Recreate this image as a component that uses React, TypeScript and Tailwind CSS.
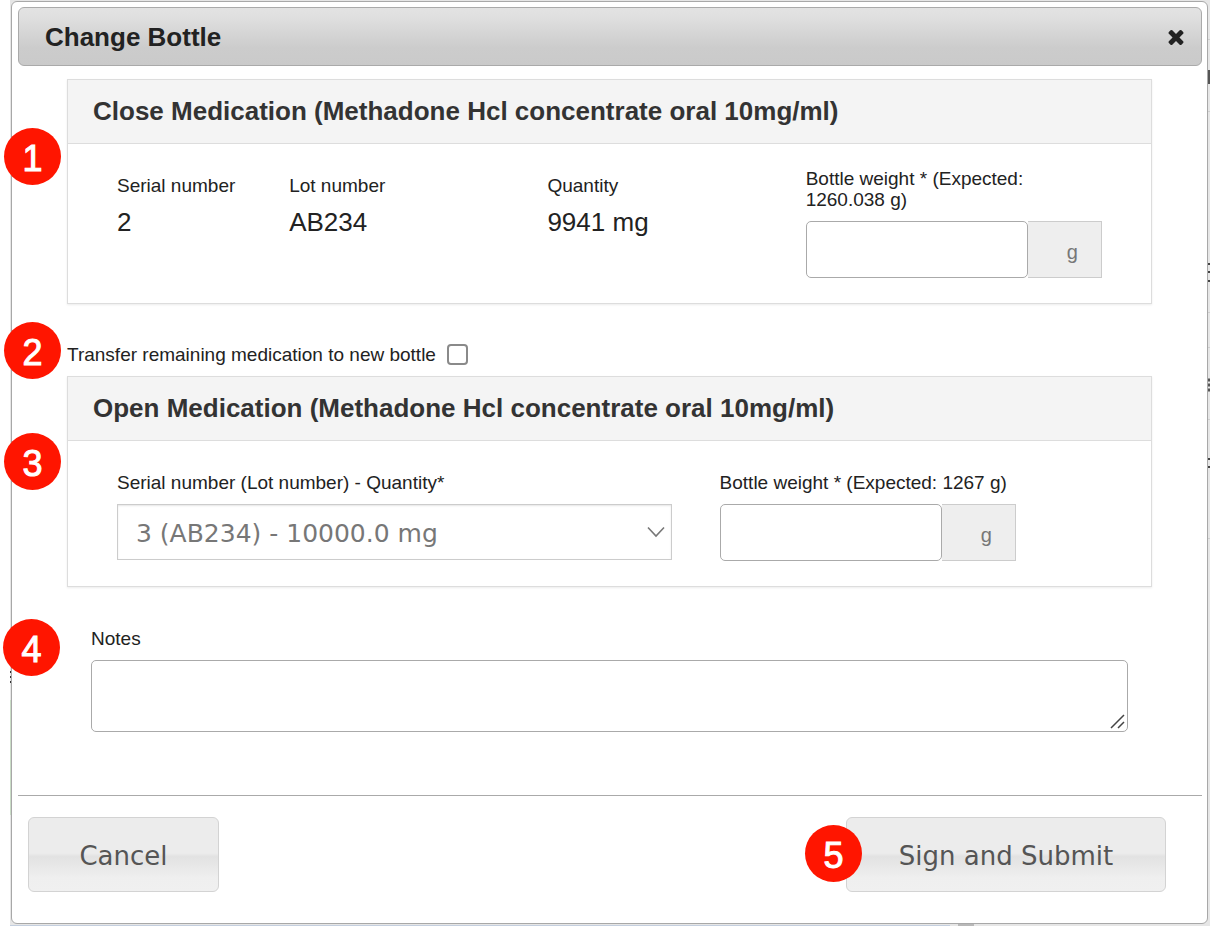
import React from "react";

function StepBadge({ step, className }: { step: number; className: string }) {
  return (
    <span
      className={`absolute z-10 flex h-[57px] w-[57px] items-center justify-center rounded-full bg-[#ff1500] pt-1 text-[36px] leading-9 text-white [-webkit-text-stroke:1px_white] ${className}`}
    >
      {step}
    </span>
  );
}

function Panel({ title, step, children }: { title: string; step: number; children: React.ReactNode }) {
  return (
    <section className="relative border border-[#dddddd] bg-white shadow-[0_1px_2px_rgba(0,0,0,0.08)]">
      <StepBadge step={step} className={step === 1 ? "top-12 -left-16" : "top-14 -left-16"} />
      <h2 className="border-b border-[#dddddd] bg-[#f4f4f4] px-[25px] text-[26px] leading-[63px] font-bold text-[#333333]">
        {title}
      </h2>
      <div className="grid grid-cols-12 px-[25px] pt-6 pb-[25px]">{children}</div>
    </section>
  );
}

function ReadOnlyField({ label, value, className }: { label: string; value: string; className: string }) {
  return (
    <dl className={`px-6 ${className}`}>
      <dt className="text-[19px] leading-[35px]">{label}</dt>
      <dd className="text-[26px] leading-[38px]">{value}</dd>
    </dl>
  );
}

function WeightInput({ id }: { id: string }) {
  return (
    <div className="flex h-[57px]">
      <input
        id={id}
        type="text"
        className="h-full w-3/4 rounded-[5px] border border-[#aaaaaa] bg-white px-4 text-[25px] outline-none"
      />
      <span className="flex h-full w-1/4 items-center justify-end border border-l-0 border-[#cccccc] bg-[#eeeeee] pt-1 pr-[23px] text-[20px] text-[#777777]">
        g
      </span>
    </div>
  );
}

const buttonClass =
  "h-[75px] rounded-[6px] border border-[#d3d3d3] bg-[linear-gradient(#ececec_0%,#ececec_48%,#e2e2e2_53%,#efefef_82%,#f0f0f0_100%)] pt-1 font-['Verdana','DejaVu_Sans',sans-serif] text-[26px] text-[#555555]";

/* Slivers of the dimmed page that show around the dialog. */
function PageEdge() {
  return (
    <div aria-hidden="true">
      <svg className="absolute inset-y-0 right-0" width="2" height="925" viewBox="0 0 2 925">
        <path d="M0 39.5h2M0 111.5h2M0 312.5h2M0 347.5h2M0 419.5h2M0 538.5h2" stroke="#cfcfcf" />
        <path d="M0 70h2v14H0z" fill="#555555" />
        <path d="M0 264h2M0 272h2M0 281h2M0 459h2M0 467h2" stroke="#444444" strokeWidth="2" />
        <path d="M0 380h2M0 385h2M0 390h2" stroke="#555555" strokeWidth="3" />
      </svg>
      <svg className="absolute inset-y-0 left-0" width="1" height="925" viewBox="0 0 1 925">
        <path d="M0 672h1M0 677h1M0 682h1" stroke="#333333" strokeWidth="2" />
        <path d="M0 700h1v115H0z" fill="#c9dcc6" />
      </svg>
      <svg className="absolute bottom-0 left-0" width="975" height="2" viewBox="0 0 975 2">
        <path d="M0 1h940v1H0z" fill="#c4cfdf" />
        <path d="M948 0h16v2h-16z" fill="#b8b8b8" />
      </svg>
    </div>
  );
}

export default function App() {
  return (
    <div className="min-h-screen bg-white pl-[10px] font-['Liberation_Sans',Arial,sans-serif] text-[#222222]">
      <div className="relative bg-[#e6e6e6] pt-px pr-[2px] pb-[2px] pl-px">
        <PageEdge />
        <div
          role="dialog"
          aria-labelledby="dialog-title"
          className="relative rounded-[6px] border border-[#a8a8a8] bg-white pt-[5px] pr-[5px] pb-[31px] pl-[6px]"
        >
          <header className="flex h-[59px] items-center justify-between rounded-[6px] border border-[#aaaaaa] bg-[linear-gradient(#e3e3e3_0%,#dedede_20%,#cccccc_70%,#cacaca_100%)] pr-[17px] pl-[26px]">
            <h1 id="dialog-title" className="text-[26px] leading-8 font-bold">
              Change Bottle
            </h1>
            <button type="button" aria-label="Close" className="flex pt-px text-[#222222]">
              <svg width="16" height="15" viewBox="302 366 1188 1188" fill="currentColor">
                <path d="M1490 1322q0 40-28 68l-136 136q-28 28-68 28t-68-28l-294-294-294 294q-28 28-68 28t-68-28l-136-136q-28-28-28-68t28-68l294-294-294-294q-28-28-28-68t28-68l136-136q28-28 68-28t68 28l294 294 294-294q28-28 68-28t68 28l136 136q28 28 28 68t-28 68l-294 294 294 294q28 28 28 68z" />
              </svg>
            </button>
          </header>

          <form>
            <div className="pt-[13px] pr-[50px] pb-[63px] pl-[49px]">
              <Panel title="Close Medication (Methadone Hcl concentrate oral 10mg/ml)" step={1}>
                <ReadOnlyField label="Serial number" value="2" className="col-span-2" />
                <ReadOnlyField label="Lot number" value="AB234" className="col-span-3" />
                <ReadOnlyField label="Quantity" value="9941 mg" className="col-span-3" />
                <div className="col-span-4 px-6">
                  <label htmlFor="close-weight" className="mb-[11px] block pr-10 text-[19px] leading-[21px]">
                    Bottle weight * (Expected: 1260.038 g)
                  </label>
                  <WeightInput id="close-weight" />
                </div>
              </Panel>

              <div className="relative flex items-center gap-[11px] pt-10 pb-[11px]">
                <StepBadge step={2} className="top-[18px] -left-[63px]" />
                <label htmlFor="transfer" className="text-[19px] leading-[21px]">
                  Transfer remaining medication to new bottle
                </label>
                <input
                  id="transfer"
                  type="checkbox"
                  className="h-[21px] w-[21px] appearance-none rounded-[4px] border-2 border-[#8a8a8a] bg-white"
                />
              </div>

              <Panel title="Open Medication (Methadone Hcl concentrate oral 10mg/ml)" step={3}>
                <div className="col-span-7 px-6">
                  <label htmlFor="serial" className="mb-1 block text-[19px] leading-[35px]">
                    Serial number (Lot number) - Quantity*
                  </label>
                  <div className="relative">
                    <select
                      id="serial"
                      className="h-14 w-full appearance-none border border-[#cccccc] bg-white pt-1 pr-10 pl-[18px] font-['Verdana','DejaVu_Sans',sans-serif] text-[25px] text-[#777777] shadow-[inset_0_1px_2px_rgba(0,0,0,0.1)]"
                    >
                      <option>3 (AB234) - 10000.0 mg</option>
                    </select>
                    <span className="pointer-events-none absolute inset-y-0 right-0 flex items-center pr-[7px]">
                      <svg
                        width="18"
                        height="12"
                        viewBox="0 0 18 12"
                        fill="none"
                        stroke="#777777"
                        strokeWidth="1.6"
                      >
                        <path d="M1 1.5 9 10l8-8.5" />
                      </svg>
                    </span>
                  </div>
                </div>
                <div className="col-span-4 px-6">
                  <label htmlFor="open-weight" className="mb-1 block text-[19px] leading-[35px]">
                    Bottle weight * (Expected: 1267 g)
                  </label>
                  <WeightInput id="open-weight" />
                </div>
              </Panel>

              <div className="relative px-6 pt-[34px]">
                <StepBadge step={4} className="top-8 -left-16" />
                <label htmlFor="notes" className="mb-1 block text-[19px] leading-[35px]">
                  Notes
                </label>
                <div className="relative">
                  <textarea
                    id="notes"
                    className="block h-[72px] w-full resize-none rounded-[5px] border border-[#aaaaaa] bg-white p-3 text-[19px] outline-none"
                  />
                  <svg
                    className="pointer-events-none absolute right-[3px] bottom-[3px]"
                    width="15"
                    height="15"
                    viewBox="0 0 15 15"
                    stroke="#444444"
                    strokeWidth="1.5"
                  >
                    <path d="M1 14 14 1M8 14l6-6" />
                  </svg>
                </div>
              </div>
            </div>

            <footer className="flex justify-between border-t border-[#aaaaaa] pt-[21px] pr-9 pl-[10px]">
              <button type="button" className={`w-[191px] ${buttonClass}`}>
                Cancel
              </button>
              <div className="relative">
                <StepBadge step={5} className="top-2 -left-[41px]" />
                <button type="button" className={`w-80 ${buttonClass}`}>
                  Sign and Submit
                </button>
              </div>
            </footer>
          </form>
        </div>
      </div>
    </div>
  );
}
